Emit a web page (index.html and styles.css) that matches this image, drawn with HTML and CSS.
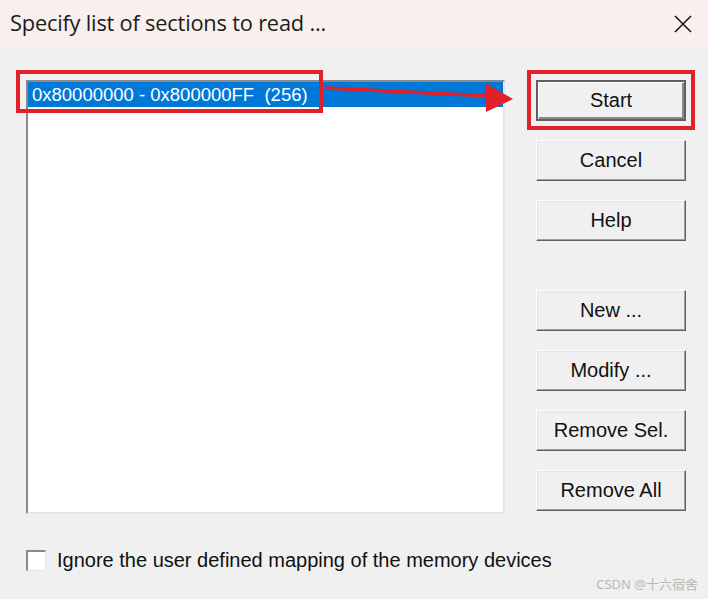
FILE: index.html
```html
<!DOCTYPE html>
<html lang="en">
  <head>
    <meta charset="UTF-8" />
    <title>Specify list of sections to read</title>
    <link rel="stylesheet" href="styles.css">
  </head>
  <body>
    <div class="dialog">
      <div class="title-bar">
        <span class="title">Specify list of sections to read ...</span>
        <span class="close">
          <svg width="20" height="20" viewBox="0 0 20 20">
            <path d="M2 2 L18 18 M18 2 L2 18" stroke="#1a1a1a" stroke-width="1.6" fill="none" />
          </svg>
        </span>
      </div>

      <div class="dialog-body">
        <div class="main-row">
          <div class="listbox">
            <div class="list-item selected">0x80000000 - 0x800000FF&nbsp;&nbsp;(256)</div>
          </div>
          <div class="button-col">
            <button class="btn default">Start</button>
            <button class="btn">Cancel</button>
            <button class="btn">Help</button>
            <button class="btn spaced">New ...</button>
            <button class="btn">Modify ...</button>
            <button class="btn">Remove Sel.</button>
            <button class="btn">Remove All</button>
          </div>
        </div>

        <label class="check-row">
          <span class="checkbox"></span>
          <span>Ignore the user defined mapping of the memory devices</span>
        </label>

        <div class="watermark">CSDN @十六宿舍</div>
      </div>

      <!-- red annotations drawn over the dialog -->
      <div class="mark mark-row"></div>
      <div class="mark mark-start"></div>
      <svg class="arrow" width="708" height="599" viewBox="0 0 708 599">
        <path d="M326 88 L490 96" stroke="#e3202a" stroke-width="3.5" fill="none" />
        <path d="M485 83 L513 99 L486 112 Z" fill="#e3202a" />
      </svg>
    </div>
  </body>
</html>
```

FILE: styles.css
```css
body {
  margin: 0;
  background-color: #f0f0f0;
  font-family: "Liberation Sans", Arial, sans-serif;
}

.dialog {
  position: relative;
  width: 708px;
  height: 599px;
  overflow: hidden;
  background-color: #f0f0f0;
}

.title-bar {
  box-sizing: border-box;
  height: 48px;
  display: flex;
  align-items: center;
  justify-content: space-between;
  padding: 0 15px 4px 10px;
  background-color: #f9f0ee;
}

.title {
  font-family: "Open Sans", "Noto Sans", sans-serif;
  font-size: 21.8px;
  color: #1b1b1b;
  letter-spacing: -0.2px;
}

.close {
  display: flex;
  margin-top: 4px;
}

.dialog-body {
  padding: 32px 0 0 26px;
}

.main-row {
  display: flex;
  align-items: flex-start;
}

.listbox {
  box-sizing: border-box;
  width: 479px;
  height: 434px;
  background-color: #fff;
  border-top: 2px solid #8a8a8a;
  border-left: 2px solid #8a8a8a;
  border-right: 2px solid #e6e6e6;
  border-bottom: 2px solid #e6e6e6;
}

.list-item {
  height: 25px;
  line-height: 25px;
  padding-left: 4px;
  font-size: 18.5px;
  white-space: nowrap;
}

.list-item.selected {
  background-color: #0078d7;
  color: #fff;
}

.button-col {
  display: flex;
  flex-direction: column;
  gap: 19px;
  margin-left: 31px;
}

.btn {
  box-sizing: border-box;
  width: 150px;
  height: 41px;
  padding: 0;
  font-family: "Liberation Sans", Arial, sans-serif;
  font-size: 20px;
  color: #111;
  background-color: #f0f0f0;
  border: 1px solid;
  border-color: #fff #5f5f5f #5f5f5f #fff;
  box-shadow: inset -1px -1px 0 #a0a0a0, inset 1px 1px 0 #e3e3e3;
  border-radius: 0;
}

.btn.default {
  border: 2px solid #5f5f5f;
  box-shadow: inset 1px 1px 0 #fff, inset -2px -2px 0 #8a8a8a;
}

.btn.spaced {
  margin-top: 30px;
}

.check-row {
  display: flex;
  align-items: center;
  gap: 11px;
  margin-top: 35px;
  font-size: 20px;
  color: #111;
}

.checkbox {
  box-sizing: border-box;
  width: 20px;
  height: 21px;
  background-color: #fff;
  border-top: 2px solid #8a8a8a;
  border-left: 2px solid #8a8a8a;
  border-right: 1px solid #e3e3e3;
  border-bottom: 1px solid #e3e3e3;
}

.watermark {
  position: absolute;
  right: 10px;
  bottom: 6px;
  font-family: "Noto Sans", "Noto Sans CJK SC", sans-serif;
  font-size: 13px;
  color: #b8b8b8;
}

.mark {
  position: absolute;
  border: 4px solid #e3202a;
}

.mark-row {
  left: 16px;
  top: 70px;
  width: 299px;
  height: 35px;
}

.mark-start {
  left: 527px;
  top: 70px;
  width: 160px;
  height: 52px;
}

.arrow {
  position: absolute;
  left: 0;
  top: 0;
  pointer-events: none;
}
```
